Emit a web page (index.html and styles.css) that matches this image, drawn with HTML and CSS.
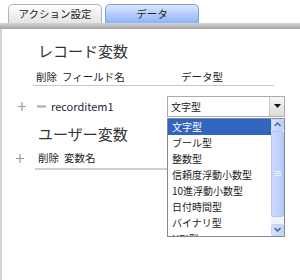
FILE: index.html
```html
<!DOCTYPE html>
<html lang="ja">
<head>
  <meta charset="UTF-8">
  <title>データ</title>
  <link rel="stylesheet" href="styles.css">
</head>
<body>
  <div class="tabs">
    <div class="tab">アクション設定</div>
    <div class="tab active">データ</div>
  </div>
  <div class="tab-rule"></div>

  <div class="panel">
    <!-- レコード変数 -->
    <h2 class="section-title">レコード変数</h2>
    <div class="head-row">
      <span class="col-del">削除</span>
      <span class="col-name">フィールド名</span>
      <span class="col-type">データ型</span>
    </div>

    <div class="item-row">
      <span class="btn-add">
        <svg width="8" height="9" viewBox="0 0 8 9"><path d="M4 0v9M0 4.5h8" stroke="#9a9a9a" stroke-width="1.2"/></svg>
      </span>
      <span class="btn-del">
        <svg width="9" height="3" viewBox="0 0 9 3"><rect x="0" y="0.5" width="9" height="2" fill="#a8a8a8"/></svg>
      </span>
      <span class="item-name">recorditem1</span>

      <div class="select">
        <div class="select-box">
          <span class="select-value">文字型</span>
          <span class="select-arrow">
            <svg width="7" height="4" viewBox="0 0 7 4"><path d="M0 0h7L3.5 4z" fill="#111"/></svg>
          </span>
        </div>
        <div class="select-list">
          <ul class="options">
            <li class="selected">文字型</li>
            <li>ブール型</li>
            <li>整数型</li>
            <li>信頼度浮動小数型</li>
            <li>10進浮動小数型</li>
            <li>日付時間型</li>
            <li>バイナリ型</li>
            <li>URI型</li>
          </ul>
          <div class="scrollbar">
            <div class="sb-btn">
              <svg width="7" height="5" viewBox="0 0 7 5"><path d="M0.5 4L3.5 1 6.5 4" fill="none" stroke="#4d6185" stroke-width="1.5"/></svg>
            </div>
            <div class="sb-thumb">
              <span></span><span></span><span></span>
            </div>
            <div class="sb-track"></div>
            <div class="sb-btn">
              <svg width="7" height="5" viewBox="0 0 7 5"><path d="M0.5 1L3.5 4 6.5 1" fill="none" stroke="#4d6185" stroke-width="1.5"/></svg>
            </div>
          </div>
        </div>
      </div>
    </div>

    <!-- ユーザー変数 -->
    <h2 class="section-title">ユーザー変数</h2>
    <div class="head-row user">
      <span class="btn-add head-add">
        <svg width="8" height="9" viewBox="0 0 8 9"><path d="M4 0v9M0 4.5h8" stroke="#9a9a9a" stroke-width="1.2"/></svg>
      </span>
      <span class="col-del">削除</span>
      <span class="col-name">変数名</span>
    </div>
  </div>
</body>
</html>
```

FILE: styles.css
```css
* {
  margin: 0;
  padding: 0;
  box-sizing: border-box;
}

body {
  font-family: "Noto Sans CJK JP", "DejaVu Sans", sans-serif;
  font-size: 10.5px;
  color: #222;
  background: #fff;
  width: 300px;
  height: 280px;
  overflow: hidden;
}

.tabs {
  display: flex;
  gap: 3px;
  padding: 4px 0 0 8px;
  height: 23px;
}

.tab {
  width: 94px;
  height: 19px;
  border: 1px solid #b4b4b4;
  border-bottom: none;
  border-radius: 5px 5px 0 0;
  background: linear-gradient(#fdfdfd, #e4e4e4);
  text-align: center;
  line-height: 18px;
  font-size: 10.5px;
  color: #222;
}

.tab.active {
  border-color: #7f9fe6;
  background: linear-gradient(#dbe7ff, #8eb2f7);
}

.tab-rule {
  height: 6px;
  background: linear-gradient(#d4d4d4, #a4a4a4);
}

.panel {
  border-left: 2px solid #d6d6d6;
  height: 251px;
  padding-top: 12px;
}

.section-title {
  font-size: 15px;
  font-weight: normal;
  line-height: 20px;
  color: #333;
  margin-left: 36px;
}

.head-row {
  display: flex;
  align-items: center;
  height: 18px;
  margin: 7px 26px 0 31px;
  padding-left: 3px;
  border-bottom: 1px solid #c8c8c8;
  line-height: 16px;
}

.head-row .col-del {
  width: 26px;
}

.head-row .col-name {
  width: 119px;
}

.head-row.user {
  margin-left: 12px;
  margin-top: 5px;
  padding-left: 0;
  border-bottom: none;
  position: relative;
}

.head-row.user::after {
  content: "";
  position: absolute;
  left: 21px;
  right: 0;
  bottom: -3px;
  border-bottom: 2px solid #d0d0d0;
}

.head-row.user .head-add {
  width: 24px;
}

.head-row.user .col-del {
  width: 26px;
}

.item-row {
  display: flex;
  align-items: center;
  height: 22px;
  margin: 9px 0 7px 14px;
}

.btn-add {
  display: flex;
  width: 21px;
  padding-left: 2px;
}

.btn-del {
  display: flex;
  width: 14px;
}

.item-name {
  width: 116px;
  font-size: 11px;
  color: #1e1e3c;
}

.select {
  position: relative;
  width: 118px;
}

.select-box {
  display: flex;
  height: 21px;
  border: 1px solid #a8acb2;
  background: #fff;
}

.select-value {
  flex: 1;
  padding-left: 3px;
  line-height: 19px;
  font-size: 10px;
}

.select-arrow {
  width: 15px;
  display: flex;
  align-items: center;
  justify-content: center;
  background: linear-gradient(#f6f6f6, #dcdcdc);
  border-left: 1px solid #c8c8c8;
}

.select-list {
  position: absolute;
  top: 22px;
  left: 0;
  width: 118px;
  height: 119px;
  border: 1px solid #7f8a99;
  background: #fff;
  display: flex;
  overflow: hidden;
  z-index: 2;
}

.options {
  list-style: none;
  flex: 1;
}

.options li {
  height: 16px;
  line-height: 16px;
  padding-left: 4px;
  font-size: 10px;
  white-space: nowrap;
}

.options li.selected {
  background: #3165c0;
  color: #fff;
}

.scrollbar {
  width: 13px;
  display: flex;
  flex-direction: column;
  background: #f4f6fc;
}

.sb-btn {
  height: 12px;
  display: flex;
  align-items: center;
  justify-content: center;
  background: linear-gradient(90deg, #d8e4fd, #bcd0fa);
  border: 1px solid #c2d3f7;
  border-radius: 2px;
}

.sb-thumb {
  height: 86px;
  display: flex;
  flex-direction: column;
  align-items: center;
  justify-content: center;
  gap: 1px;
  background: linear-gradient(90deg, #cbdaff, #b7cbf8);
  border: 1px solid #b3c6f2;
  border-radius: 2px;
}

.sb-thumb span {
  width: 6px;
  height: 1px;
  background: #eef3ff;
}

.sb-track {
  flex: 1;
  background: #f2f3f7;
}
```
